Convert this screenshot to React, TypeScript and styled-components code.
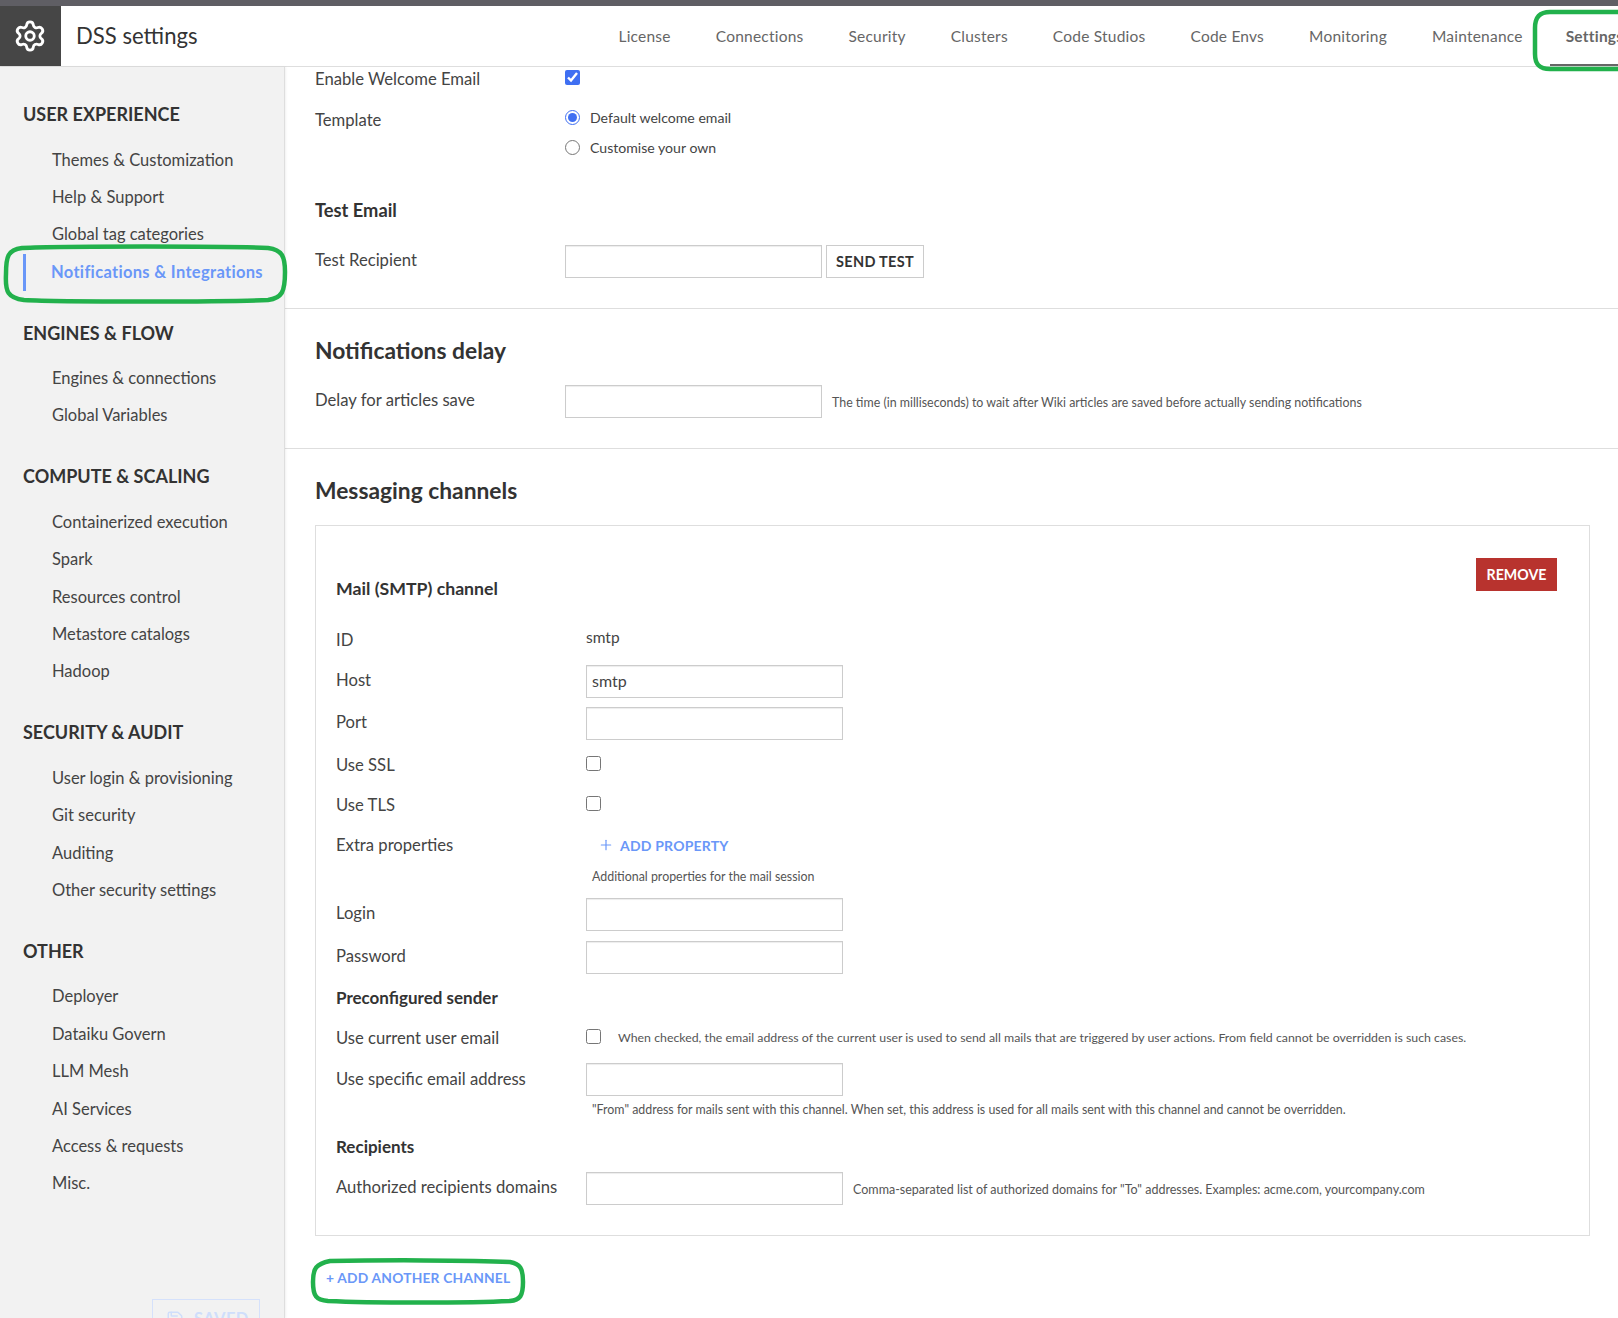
import React from "react";
import styled, { createGlobalStyle } from "styled-components";
import { Settings, Save, Plus } from "lucide-react";

const GlobalStyle = createGlobalStyle`
  html, body {
    margin: 0;
    padding: 0;
    background: #fff;
  }
  body {
    font-family: Lato, "Noto Sans", sans-serif;
    color: #444;
  }
`;

const Page = styled.div`
  position: relative;
  width: 1618px;
  height: 1318px;
  overflow: hidden;
  border-top: 6px solid #5f5e64;
  box-sizing: border-box;
`;

const Header = styled.header`
  display: flex;
  align-items: flex-start;
  height: 61px;
  border-bottom: 1px solid #dedede;
  box-sizing: border-box;
  overflow: visible;
`;

const GearBox = styled.div`
  flex: 0 0 61px;
  box-sizing: border-box;
  height: 60px;
  padding-right: 2px;
  background: #464646;
  color: #fff;
  display: flex;
  align-items: center;
  justify-content: center;
`;

const PageTitle = styled.div`
  flex: 0 0 520px;
  padding-left: 15px;
  font-size: 22.1px;
  line-height: 60px;
  color: #333;
`;

const TabBar = styled.nav`
  display: flex;
  flex: none;
`;

const Tab = styled.a<{ $active?: boolean }>`
  padding: 0 ${(p) => (p.$active ? "16px" : "22.5px")};
  margin-left: ${(p) => (p.$active ? "4.5px" : "0")};
  font-size: 15.5px;
  line-height: 60px;
  height: 60px;
  letter-spacing: 0.22px;
  color: #666;
  font-weight: ${(p) => (p.$active ? 700 : 400)};
  box-shadow: ${(p) => (p.$active ? "inset 0 -2px 0 #666" : "none")};
`;

const Body = styled.div`
  display: flex;
  height: 1251px;
`;

const Sidebar = styled.aside`
  position: relative;
  flex: 0 0 285px;
  box-sizing: border-box;
  padding: 32px 0 0 23px;
  background: #f2f2f2;
  border-right: 1px solid #dedede;
  box-shadow: 1px 0 2px rgba(0, 0, 0, 0.06);
`;

const NavSection = styled.section`
  margin-bottom: 26.5px;
`;

const NavHeading = styled.h3`
  margin: 0 0 12.5px;
  font-size: 18px;
  line-height: 30px;
  font-weight: 700;
  color: #333;
`;

const NavItem = styled.a<{ $active?: boolean }>`
  display: block;
  height: 37.4px;
  line-height: 37.4px;
  padding-left: ${(p) => (p.$active ? "25px" : "29px")};
  font-size: 16.5px;
  letter-spacing: ${(p) => (p.$active ? "0.32px" : "0")};
  color: ${(p) => (p.$active ? "#6a97f8" : "#444")};
  font-weight: ${(p) => (p.$active ? 700 : 400)};
  border-left: ${(p) => (p.$active ? "3px solid #6a97f8" : "none")};
  white-space: nowrap;
`;

const SavedButton = styled.button`
  position: absolute;
  left: 152px;
  top: 1232px;
  width: 108px;
  height: 40px;
  display: flex;
  align-items: center;
  gap: 10px;
  padding: 0 0 0 13px;
  background: transparent;
  border: 1px solid #d5e1fb;
  color: #cfdefb;
  font-family: inherit;
  font-size: 16.5px;
  font-weight: 700;
  letter-spacing: 0.4px;
`;

const Main = styled.main`
  flex: 1;
  min-width: 0;
`;

const Section = styled.section<{ $noBorder?: boolean }>`
  padding: 0 28px 30px 30px;
  border-bottom: ${(p) => (p.$noBorder ? "none" : "1px solid #dedede")};
`;

const SectionTitle = styled.h2`
  margin: 0;
  padding-top: 26px;
  font-size: 22.8px;
  line-height: 30px;
  font-weight: 700;
  color: #333;
`;

const Row = styled.div<{ $height?: number; $top?: number }>`
  display: flex;
  align-items: center;
  height: ${(p) => p.$height ?? 24}px;
  margin-top: ${(p) => p.$top ?? 0}px;
`;

const RowTop = styled(Row)`
  align-items: flex-start;
  height: auto;
`;

const Label = styled.label<{ $shift?: number }>`
  flex: 0 0 250px;
  font-size: 16.65px;
  color: #444;
  white-space: nowrap;
  position: relative;
  top: ${(p) => p.$shift ?? -2}px;
`;

const TemplateLabel = styled(Label)`
  margin-top: 10px;
`;

const SubHeading = styled.h4<{ $top?: number; $size?: number }>`
  margin: ${(p) => p.$top ?? 0}px 0 0;
  height: 24px;
  line-height: 24px;
  font-size: ${(p) => p.$size ?? 17}px;
  font-weight: 700;
  color: #333;
`;

const TextInput = styled.input`
  box-sizing: border-box;
  width: 257px;
  height: 33px;
  padding: 0 5px 2px;
  border: 1px solid #ccc;
  border-radius: 0;
  box-shadow: inset 0 1px 1px rgba(0, 0, 0, 0.075);
  font-family: inherit;
  font-size: 16px;
  color: #444;
  outline: none;
`;

const CheckBox = styled.input.attrs({ type: "checkbox" })`
  width: 15px;
  height: 15px;
  margin: 0;
  accent-color: #3f6ff2;
`;

const RadioInput = styled.input.attrs({ type: "radio" })`
  width: 15px;
  height: 15px;
  margin: 0 10px 0 0;
  accent-color: #3f6ff2;
`;

const RadioGroup = styled.div`
  display: flex;
  flex-direction: column;
`;

const RadioOption = styled.label`
  display: flex;
  align-items: center;
  height: 30.5px;
  font-size: 14.1px;
  color: #444;
`;

const GhostButton = styled.button`
  box-sizing: border-box;
  height: 33px;
  width: 98px;
  margin-left: 4px;
  padding: 0;
  background: #fff;
  border: 1px solid #ccc;
  font-family: inherit;
  font-size: 14.5px;
  font-weight: 700;
  letter-spacing: 0.3px;
  color: #333;
`;

const HelpText = styled.span<{ $left?: number; $size?: number }>`
  margin-left: ${(p) => p.$left ?? 10}px;
  font-size: ${(p) => p.$size ?? 12.4}px;
  color: #555;
  white-space: nowrap;
  position: relative;
  top: 1px;
`;

const HelpLine = styled.div<{ $top?: number }>`
  height: 20px;
  line-height: 20px;
  margin-top: ${(p) => p.$top ?? 0}px;
  padding-left: 256px;
  font-size: 12.4px;
  color: #555;
  white-space: nowrap;
`;

const Card = styled.div`
  margin-top: 20px;
  padding: 32px 32px 30px 20px;
  border: 1px solid #dedede;
`;

const CardHead = styled.div`
  display: flex;
  justify-content: space-between;
  align-items: flex-start;
`;

const CardTitle = styled.h3`
  margin: 16px 0 -1px;
  font-size: 17.7px;
  line-height: 30px;
  font-weight: 700;
  color: #333;
`;

const RemoveButton = styled.button`
  width: 81px;
  height: 33px;
  padding: 0;
  border: none;
  background: #b8332e;
  color: #fff;
  font-family: inherit;
  font-size: 14.2px;
  font-weight: 700;
`;

const StaticValue = styled.span`
  font-size: 15.5px;
  color: #444;
  position: relative;
  top: -2px;
`;

const LinkButton = styled.a`
  display: flex;
  align-items: center;
  gap: 6px;
  margin-left: 12px;
  font-size: 14px;
  font-weight: 700;
  letter-spacing: 0.2px;
  color: #6a97f8;
`;

const AddChannel = styled.a`
  display: block;
  margin-top: 29.5px;
  padding-left: 11px;
  line-height: 24px;
  font-size: 13.8px;
  font-weight: 700;
  letter-spacing: 0.2px;
  color: #6a97f8;
`;

const Annotation = styled.svg`
  position: absolute;
  left: 0;
  top: 0;
  width: 1618px;
  height: 1318px;
  margin-top: -6px;
  pointer-events: none;
`;

const tabs = ["License", "Connections", "Security", "Clusters", "Code Studios", "Code Envs", "Monitoring", "Maintenance"];

const nav = [
  { title: "USER EXPERIENCE", items: ["Themes & Customization", "Help & Support", "Global tag categories", "Notifications & Integrations"] },
  { title: "ENGINES & FLOW", items: ["Engines & connections", "Global Variables"] },
  { title: "COMPUTE & SCALING", items: ["Containerized execution", "Spark", "Resources control", "Metastore catalogs", "Hadoop"] },
  { title: "SECURITY & AUDIT", items: ["User login & provisioning", "Git security", "Auditing", "Other security settings"] },
  { title: "OTHER", items: ["Deployer", "Dataiku Govern", "LLM Mesh", "AI Services", "Access & requests", "Misc."] },
];

const App = () => {
  return (
    <Page>
      <GlobalStyle />
      <Header>
        <GearBox>
          <Settings size={34} strokeWidth={2} />
        </GearBox>
        <PageTitle>DSS settings</PageTitle>
        <TabBar>
          {tabs.map((t) => (
            <Tab key={t}>{t}</Tab>
          ))}
          <Tab $active>Settings</Tab>
        </TabBar>
      </Header>
      <Body>
        <Sidebar>
          {nav.map((s) => (
            <NavSection key={s.title}>
              <NavHeading>{s.title}</NavHeading>
              {s.items.map((i) => (
                <NavItem key={i} $active={i === "Notifications & Integrations"}>
                  {i}
                </NavItem>
              ))}
            </NavSection>
          ))}
          <SavedButton>
            <Save size={18} />
            SAVED
          </SavedButton>
        </Sidebar>
        <Main>
          <Section>
            <Row $height={20}>
              <Label $shift={2}>Enable Welcome Email</Label>
              <CheckBox defaultChecked />
            </Row>
            <RowTop $top={15}>
              <TemplateLabel>Template</TemplateLabel>
              <RadioGroup>
                <RadioOption>
                  <RadioInput name="tpl" defaultChecked />
                  Default welcome email
                </RadioOption>
                <RadioOption>
                  <RadioInput name="tpl" />
                  Customise your own
                </RadioOption>
              </RadioGroup>
            </RowTop>
            <SubHeading $top={34.5} $size={18.3}>Test Email</SubHeading>
            <Row $height={33} $top={23.5}>
              <Label>Test Recipient</Label>
              <TextInput />
              <GhostButton>SEND TEST</GhostButton>
            </Row>
          </Section>
          <Section>
            <SectionTitle>Notifications delay</SectionTitle>
            <Row $height={33} $top={20}>
              <Label>Delay for articles save</Label>
              <TextInput />
              <HelpText>The time (in milliseconds) to wait after Wiki articles are saved before actually sending notifications</HelpText>
            </Row>
          </Section>
          <Section $noBorder>
            <SectionTitle>Messaging channels</SectionTitle>
            <Card>
              <CardHead>
                <CardTitle>Mail (SMTP) channel</CardTitle>
                <RemoveButton>REMOVE</RemoveButton>
              </CardHead>
              <Row $height={30} $top={21}>
                <Label $shift={1}>ID</Label>
                <StaticValue>smtp</StaticValue>
              </Row>
              <Row $height={33} $top={11}>
                <Label>Host</Label>
                <TextInput defaultValue="smtp" />
              </Row>
              <Row $height={33} $top={9}>
                <Label>Port</Label>
                <TextInput />
              </Row>
              <Row $top={11}>
                <Label $shift={2}>Use SSL</Label>
                <CheckBox />
              </Row>
              <Row $top={16}>
                <Label $shift={2}>Use TLS</Label>
                <CheckBox />
              </Row>
              <Row $top={18}>
                <Label $shift={0}>Extra properties</Label>
                <LinkButton>
                  <Plus size={16} strokeWidth={1.8} />
                  ADD PROPERTY
                </LinkButton>
              </Row>
              <HelpLine $top={10}>Additional properties for the mail session</HelpLine>
              <Row $height={33} $top={11}>
                <Label>Login</Label>
                <TextInput />
              </Row>
              <Row $height={33} $top={10}>
                <Label>Password</Label>
                <TextInput />
              </Row>
              <SubHeading $top={12}>Preconfigured sender</SubHeading>
              <Row $top={14}>
                <Label $shift={2}>Use current user email</Label>
                <CheckBox />
                <HelpText $left={17} $size={12.34}>When checked, the email address of the current user is used to send all mails that are triggered by user actions. From field cannot be overridden is such cases.</HelpText>
              </Row>
              <Row $height={33} $top={15}>
                <Label $shift={-1}>Use specific email address</Label>
                <TextInput />
              </Row>
              <HelpLine $top={4}>"From" address for mails sent with this channel. When set, this address is used for all mails sent with this channel and cannot be overridden.</HelpLine>
              <SubHeading $top={14.5}>Recipients</SubHeading>
              <Row $height={33} $top={13.5}>
                <Label $shift={-2}>Authorized recipients domains</Label>
                <TextInput />
                <HelpText $size={12.53}>Comma-separated list of authorized domains for "To" addresses. Examples: acme.com, yourcompany.com</HelpText>
              </Row>
            </Card>
            <AddChannel>+ ADD ANOTHER CHANNEL</AddChannel>
          </Section>
        </Main>
      </Body>
      <Annotation viewBox="0 0 1618 1318" fill="none" stroke="#22b14c" strokeWidth="4.5">
        <path d="M22 248 C60 246 230 246 268 248 C282 250 285 256 285 272 C285 292 282 298 268 300 C230 302 60 302 24 300 C8 298 5 292 6 274 C6 256 8 250 22 248 Z" />
        <path d="M1618 12 L1550 12 C1539 12 1535 18 1535 28 L1535 54 C1535 64 1539 69 1550 69 L1618 69" />
        <path d="M330 1261 C380 1260 470 1260 510 1262 C520 1264 523 1268 523 1282 C523 1296 520 1300 510 1301 C470 1303 370 1303 328 1301 C316 1300 313 1296 313 1282 C313 1268 316 1264 330 1261 Z" />
      </Annotation>
    </Page>
  );
};

export default App;
